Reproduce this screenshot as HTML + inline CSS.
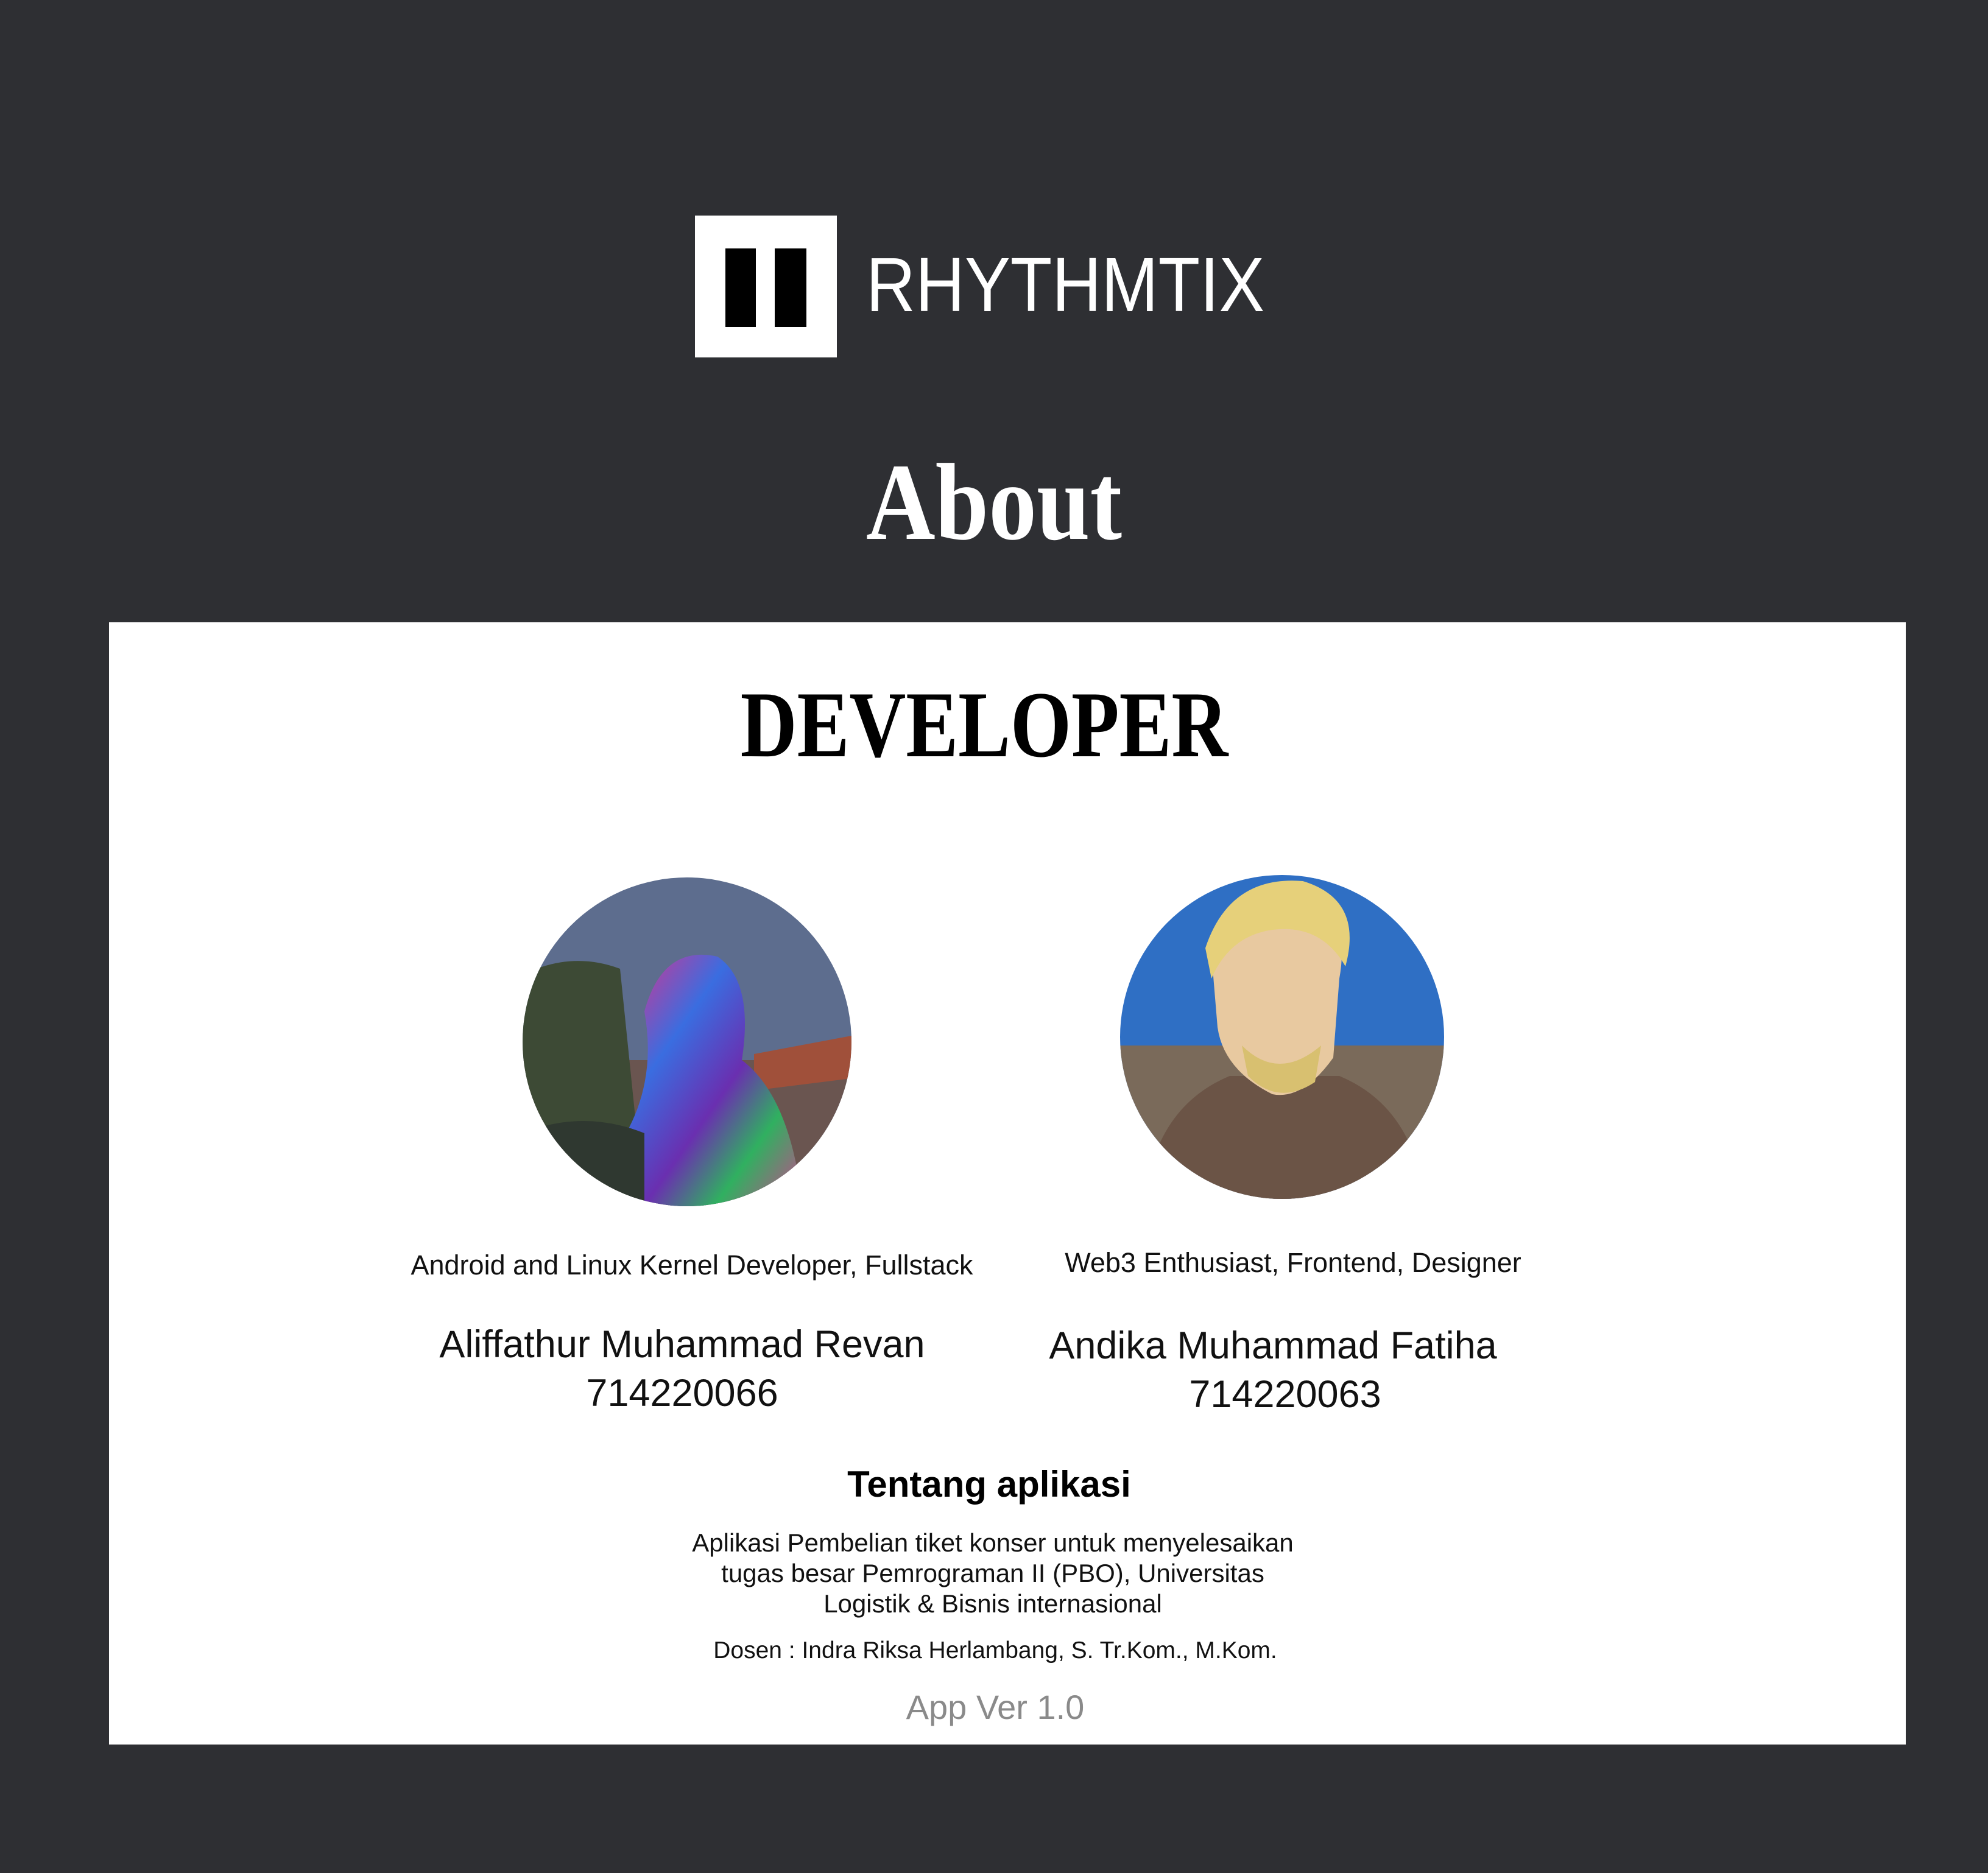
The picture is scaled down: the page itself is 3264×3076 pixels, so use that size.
<!DOCTYPE html>
<html><head><meta charset="utf-8"><style>
html,body{margin:0;padding:0}
body{width:3264px;height:3076px;background:#2e2f33;position:relative;overflow:hidden;font-family:"Liberation Sans",sans-serif}
.abs{position:absolute}
.c{position:absolute;left:0;width:100%;text-align:center;white-space:nowrap}
</style></head><body>
<div class="abs" style="left:1141px;top:354px;width:233px;height:233px;background:#fff"></div>
<div class="abs" style="left:1191px;top:408px;width:50px;height:129px;background:#000"></div>
<div class="abs" style="left:1272px;top:408px;width:52px;height:129px;background:#000"></div>
<div class="abs" style="left:1422px;top:398px;font-size:126px;color:#fff;line-height:140px;transform:scaleX(0.89);transform-origin:left">RHYTHMTIX</div>
<div class="c" style="top:735px;font-family:'Liberation Serif',serif;font-weight:bold;font-size:180px;line-height:180px;color:#fff;left:0;transform:scaleX(0.875)">About</div>

<div class="abs" style="left:179px;top:1022px;width:2950px;height:1843px;background:#fff"></div>
<div class="c" style="top:1110px;font-family:'Liberation Serif',serif;font-weight:bold;font-size:155px;line-height:160px;color:#000;left:-16px;transform:scaleX(0.83)">DEVELOPER</div>

<svg class="abs" style="left:858px;top:1441px" width="540" height="540" viewBox="0 0 540 540">
<defs><clipPath id="a"><circle cx="270" cy="270" r="270"/></clipPath>
<linearGradient id="g1" x1="0" y1="0" x2="1" y2="1"><stop offset="0" stop-color="#e0308a"/><stop offset=".3" stop-color="#3a6de0"/><stop offset=".55" stop-color="#6a2fb0"/><stop offset=".75" stop-color="#30b060"/><stop offset="1" stop-color="#d04090"/></linearGradient></defs>
<g clip-path="url(#a)">
<rect width="540" height="540" fill="#5d6d8e"/>
<rect y="300" width="540" height="240" fill="#6a5550"/>
<path d="M0 160 Q80 120 160 150 L200 540 L0 540Z" fill="#3d4a35"/>
<path d="M380 290 L540 260 L540 330 L380 350Z" fill="#a0503a"/>
<path d="M190 540 L170 420 Q220 330 200 220 Q230 110 320 130 Q380 170 360 300 Q440 360 460 540Z" fill="url(#g1)"/>
<path d="M0 420 Q100 380 200 420 L200 540 L0 540Z" fill="#2f3830"/>
</g></svg>

<svg class="abs" style="left:1839px;top:1437px" width="532" height="532" viewBox="0 0 532 532">
<defs><clipPath id="b"><circle cx="266" cy="266" r="266"/></clipPath></defs>
<g clip-path="url(#b)">
<rect width="532" height="532" fill="#2f6fc4"/>
<rect y="280" width="532" height="252" fill="#7a6a5a"/>
<path d="M40 532 Q60 380 180 330 L360 330 Q480 380 500 532Z" fill="#6b5446"/>
<path d="M150 130 Q170 20 300 30 Q380 60 360 170 L350 300 Q300 370 250 360 Q170 320 160 250Z" fill="#e8c9a0"/>
<path d="M140 120 Q180 0 300 10 Q400 40 370 150 Q330 80 250 90 Q180 100 150 170Z" fill="#e6d07a"/>
<path d="M200 280 Q260 340 330 280 L320 340 Q260 380 210 330Z" fill="#d8c070"/>
</g></svg>

<div class="abs" style="left:600px;width:1072px;text-align:center;top:2050px;font-size:45px;line-height:56px;color:#111">Android and Linux Kernel Developer, Fullstack</div>
<div class="abs" style="left:1620px;width:1006px;text-align:center;top:2046px;font-size:45px;line-height:56px;color:#111">Web3 Enthusiast, Frontend, Designer</div>
<div class="abs" style="left:600px;width:1040px;text-align:center;top:2170px;font-size:63px;line-height:76px;color:#111">Aliffathur Muhammad Revan</div>
<div class="abs" style="left:600px;width:1040px;text-align:center;top:2250px;font-size:63px;line-height:76px;color:#111">714220066</div>
<div class="abs" style="left:1590px;width:1000px;text-align:center;top:2172px;font-size:63px;line-height:76px;color:#111">Andika Muhammad Fatiha</div>
<div class="abs" style="left:1610px;width:1000px;text-align:center;top:2252px;font-size:63px;line-height:76px;color:#111">714220063</div>
<div class="c" style="top:2404px;font-size:60px;line-height:68px;font-weight:bold;color:#000;left:-8px">Tentang aplikasi</div>
<div class="c" style="top:2509px;font-size:42px;line-height:50px;color:#111;left:-2px">Aplikasi Pembelian tiket konser untuk menyelesaikan<br>tugas besar Pemrograman II (PBO), Universitas<br>Logistik &amp; Bisnis internasional</div>
<div class="c" style="top:2688px;font-size:39px;line-height:46px;color:#111;left:2px">Dosen : Indra Riksa Herlambang, S. Tr.Kom., M.Kom.</div>
<div class="c" style="top:2772px;font-size:56px;line-height:64px;color:#8a8a8a;left:2px">App Ver 1.0</div>
</body></html>
